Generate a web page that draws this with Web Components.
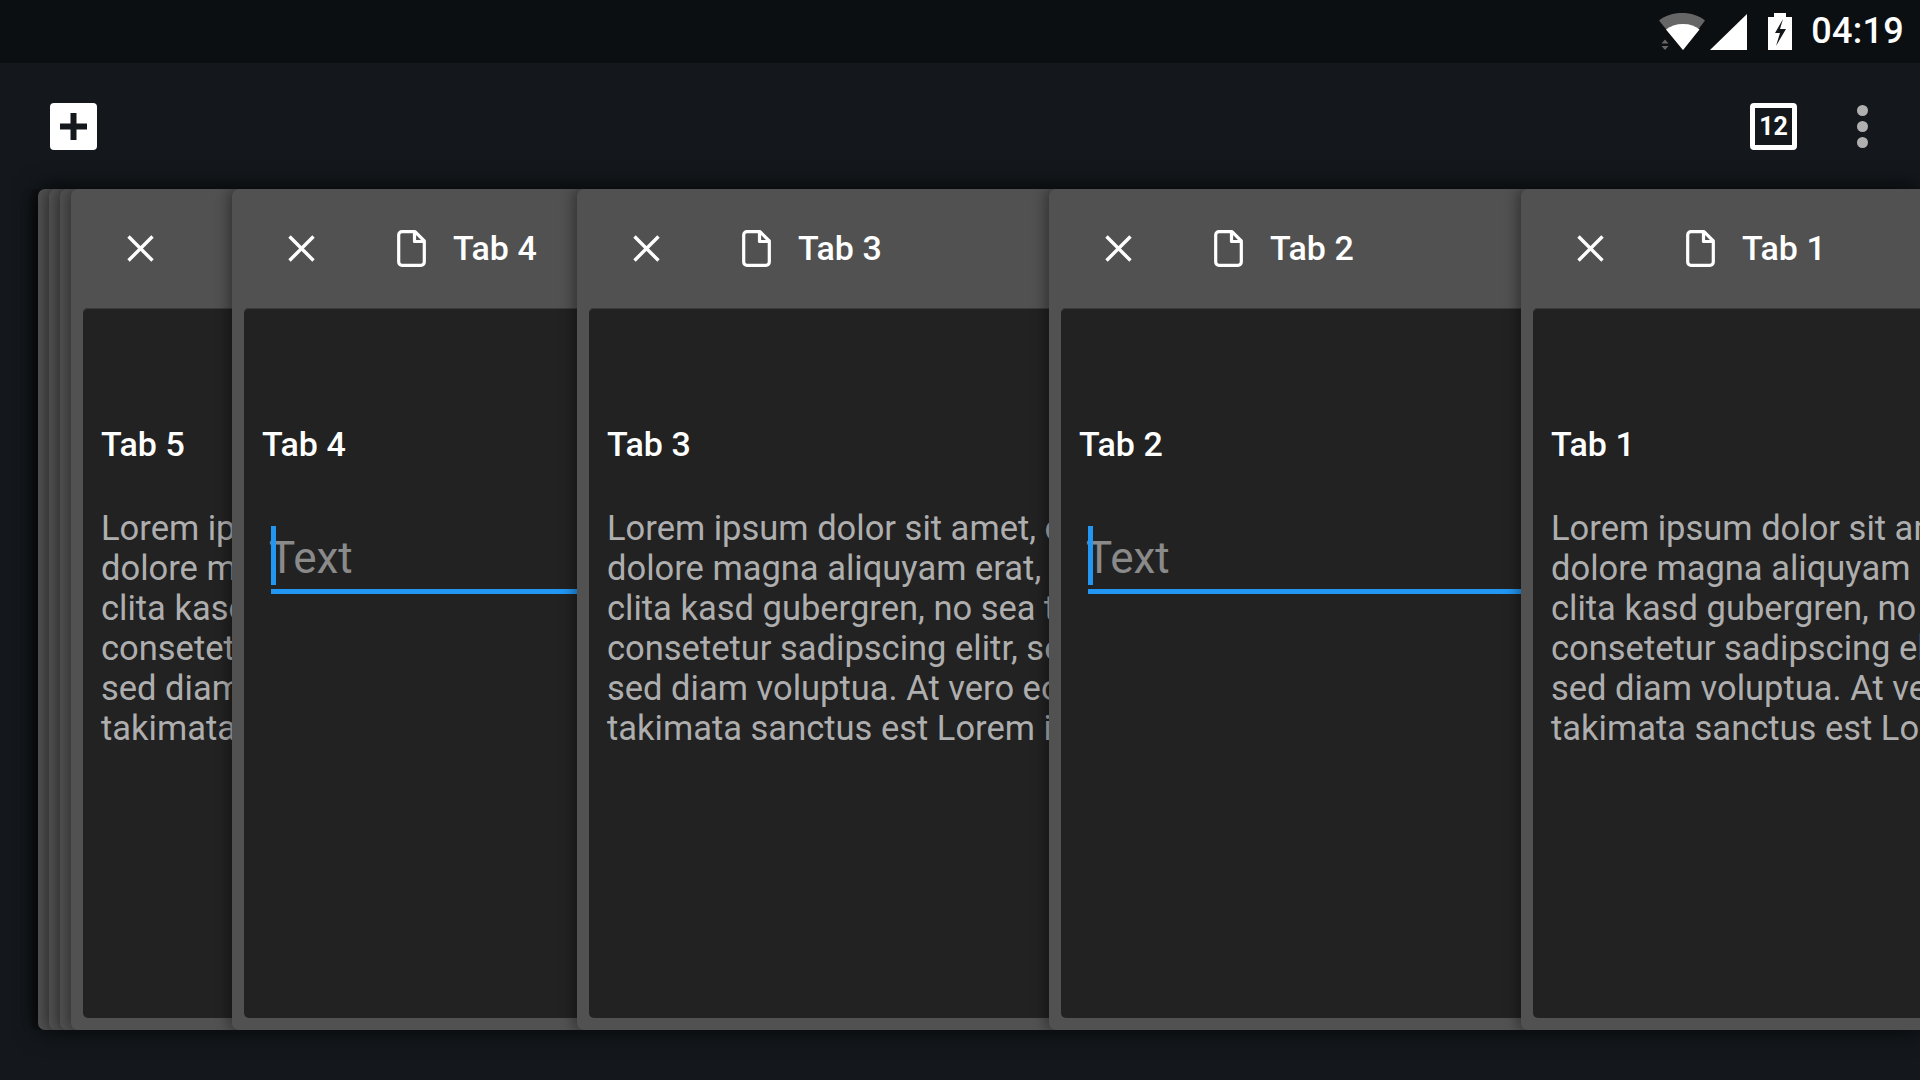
<!DOCTYPE html>
<html>

<head>
  <title>Tabs</title>
  <style>
    html, body { margin: 0; height: 100%; }
    body { background: #14181c; overflow: hidden; font-family: Roboto, "Liberation Sans", sans-serif; }
    #app { display: flex; flex-direction: column; width: 1920px; height: 1080px; }
  </style>
</head>

<body>
  <div id="app">
    <status-bar>04:19</status-bar>
    <tab-toolbar count="12"></tab-toolbar>
    <tab-stack>
      <tab-card left="0" width="40"></tab-card>
      <tab-card left="11" width="40"></tab-card>
      <tab-card left="22" width="40"></tab-card>
      <tab-card left="33" width="172" heading="Tab 5" bare><lorem-text>Lorem ip
dolore m
clita kasc
consetet
sed diam
takimata</lorem-text></tab-card>
      <tab-card left="194" width="356" label="Tab 4" heading="Tab 4"><text-field></text-field></tab-card>
      <tab-card left="539" width="483" label="Tab 3" heading="Tab 3"><lorem-text>Lorem ipsum dolor sit amet, c
dolore magna aliquyam erat, s
clita kasd gubergren, no sea t
consetetur sadipscing elitr, se
sed diam voluptua. At vero eo
takimata sanctus est Lorem i</lorem-text></tab-card>
      <tab-card left="1011" width="483" label="Tab 2" heading="Tab 2"><text-field></text-field></tab-card>
      <tab-card left="1483" width="399" label="Tab 1" heading="Tab 1"><lorem-text>Lorem ipsum dolor sit am
dolore magna aliquyam e
clita kasd gubergren, no
consetetur sadipscing eli
sed diam voluptua. At ver
takimata sanctus est Lor</lorem-text></tab-card>
    </tab-stack>
  </div>

  <script>
    class StatusBar extends HTMLElement {
      constructor() {
        super();
        this.attachShadow({ mode: 'open' });
        this.shadowRoot.innerHTML = `<style>
          :host { display: flex; justify-content: flex-end; align-items: center; height: 63px; flex: none;
            background: #0c0f12; color: #fff; padding-right: 16px; box-sizing: border-box; }
          svg { display: block; flex: none; }
          .time { font-size: 36px; font-weight: 500; line-height: 63px; margin-left: 19px; letter-spacing: .3px; }
          .wifi { margin-right: 5px; }
          .signal { margin-right: 21px; }
        </style>
        <svg class="wifi" width="46" height="37" viewBox="0 0 46 37">
          <path d="M0 7.5C6 2.6 14 0 23 0s17 2.6 23 7.5L24 37z" fill="#666"/>
          <path d="M7 16.5C11.5 13 17 11 24 11s12.5 2 16.5 5.500L24 37z" fill="#fff"/>
          <path d="M6 26.500l-3.500 4h7zM6 37l-3.500-4h7z" fill="#666"/>
        </svg>
        <svg class="signal" width="37" height="36" viewBox="0 0 37 36"><path d="M0 36L37 0v36z" fill="#fff"/></svg>
        <svg width="24" height="37" viewBox="0 0 24 37">
          <path d="M6 0h12v4h6v33H0V4h6z" fill="#fff"/>
          <path d="M15 6l-8 14h5l-4 13 10-17h-6z" fill="#14181c"/>
        </svg>
        <span class="time"><slot></slot></span>`;
      }
    }

    class TabToolbar extends HTMLElement {
      constructor() {
        super();
        this.attachShadow({ mode: 'open' });
        this.shadowRoot.innerHTML = `<style>
          :host { display: flex; align-items: center; height: 126px; flex: none; padding: 1px 52px 0 50px; box-sizing: border-box; }
          .add { width: 47px; height: 47px; border-radius: 4px; background: #fff; display: flex; align-items: center; justify-content: center; }
          .spacer { flex: 1; }
          .count { width: 47px; height: 47px; box-sizing: border-box; border: 5px solid #fff; border-radius: 4px; color: #fff;
            font-size: 25px; font-weight: 700; display: flex; align-items: center; justify-content: center; margin-right: 60px; }
          .menu { display: flex; flex-direction: column; gap: 5px; }
          .menu i { display: block; width: 11px; height: 11px; border-radius: 50%; background: #b0b0b0; }
        </style>
        <div class="add"><svg width="27" height="27" viewBox="0 0 27 27"><path d="M10.500 0h6v10.500H27v6H16.500V27h-6V16.500H0v-6h10.500z" fill="#14181c"/></svg></div>
        <div class="spacer"></div>
        <div class="count">${this.getAttribute('count')}</div>
        <div class="menu"><i></i><i></i><i></i></div>`;
      }
    }

    // the outer shadow sits on the stack so that it does not add up where cards overlap
    class TabStack extends HTMLElement {
      constructor() {
        super();
        this.attachShadow({ mode: 'open' });
        this.shadowRoot.innerHTML = `<style>
          :host { display: block; position: relative; height: 841px; margin-left: 38px; flex: none;
            border-radius: 7px 0 0 7px; box-shadow: 0 0 24px rgba(0, 0, 0, .85); }
        </style><slot></slot>`;
      }
    }

    class TabCard extends HTMLElement {
      constructor() {
        super();
        this.attachShadow({ mode: 'open' });
        const label = this.getAttribute('label') || '';
        const heading = this.getAttribute('heading') || '';
        const closeIcon = `<svg class="close" width="27" height="27" viewBox="0 0 27 27"><path d="M1.500 1.500l24 24M25.500 1.500l-24 24" fill="none" stroke="#fff" stroke-width="3.400"/></svg>`;
        const fileIcon = `<svg class="file" width="29" height="37" viewBox="0 0 29 37"><path d="M5 1.700h13L27.300 11v21a3.300 3.300 0 0 1-3.300 3.300H5A3.300 3.300 0 0 1 1.700 32V5A3.300 3.300 0 0 1 5 1.700zM17.500 2v9.500h10" fill="none" stroke="#fff" stroke-width="3.200" stroke-linejoin="round"/></svg>`;
        this.shadowRoot.innerHTML = `<style>
          :host { position: absolute; top: 0; height: 841px; box-sizing: border-box; display: flex; flex-direction: column;
            background: #515151; border-radius: 7px 0 0 7px; padding: 0 0 12px 12px; color: #fff;
            box-shadow: -3px 0 14px rgba(0, 0, 0, .4); clip-path: inset(0 0 0 -30px); }
          header { display: flex; align-items: center; height: 119px; flex: none; padding-left: 44px; font-size: 34px; font-weight: 500; overflow: hidden; }
          header svg { display: block; flex: none; }
          header span { margin-top: -2px; }
          .close { margin-right: 82px; }
          .file { margin-right: 27px; }
          main { flex: 1; background: #222; border-radius: 5px 0 0 5px; padding: 0 0 0 18px; overflow: hidden; box-shadow: inset 0 1px 0 #3a3a3a; }
          h1 { margin: 0; padding-top: 116px; font-size: 34px; line-height: 40px; font-weight: 500; }
        </style>
        <header>${heading ? closeIcon : ''}${label ? fileIcon + `<span>${label}</span>` : ''}</header>
        <main>${heading ? `<h1>${heading}</h1>` : ''}<slot></slot></main>`;
        this.style.left = this.getAttribute('left') + 'px';
        this.style.width = this.getAttribute('width') + 'px';
      }
    }

    class LoremText extends HTMLElement {
      constructor() {
        super();
        this.attachShadow({ mode: 'open' });
        this.shadowRoot.innerHTML = `<style>
          :host { display: block; margin-top: 44px; font-size: 34.5px; line-height: 40px; color: #aeaeae; white-space: pre; }
        </style><slot></slot>`;
      }
    }

    class TextField extends HTMLElement {
      constructor() {
        super();
        this.attachShadow({ mode: 'open' });
        this.shadowRoot.innerHTML = `<style>
          :host { display: block; position: relative; margin: 65px 0 0 9px; height: 60px; border-bottom: 5px solid #2196f3;
            font-size: 44px; line-height: 58px; color: #8a8a8a; text-indent: -2px; }
          .caret { position: absolute; left: 0; top: -3px; width: 5px; height: 59px; background: #2196f3; }
        </style><span class="caret"></span>Text`;
      }
    }

    customElements.define('status-bar', StatusBar);
    customElements.define('tab-toolbar', TabToolbar);
    customElements.define('tab-stack', TabStack);
    customElements.define('tab-card', TabCard);
    customElements.define('lorem-text', LoremText);
    customElements.define('text-field', TextField);
  </script>
</body>

</html>
